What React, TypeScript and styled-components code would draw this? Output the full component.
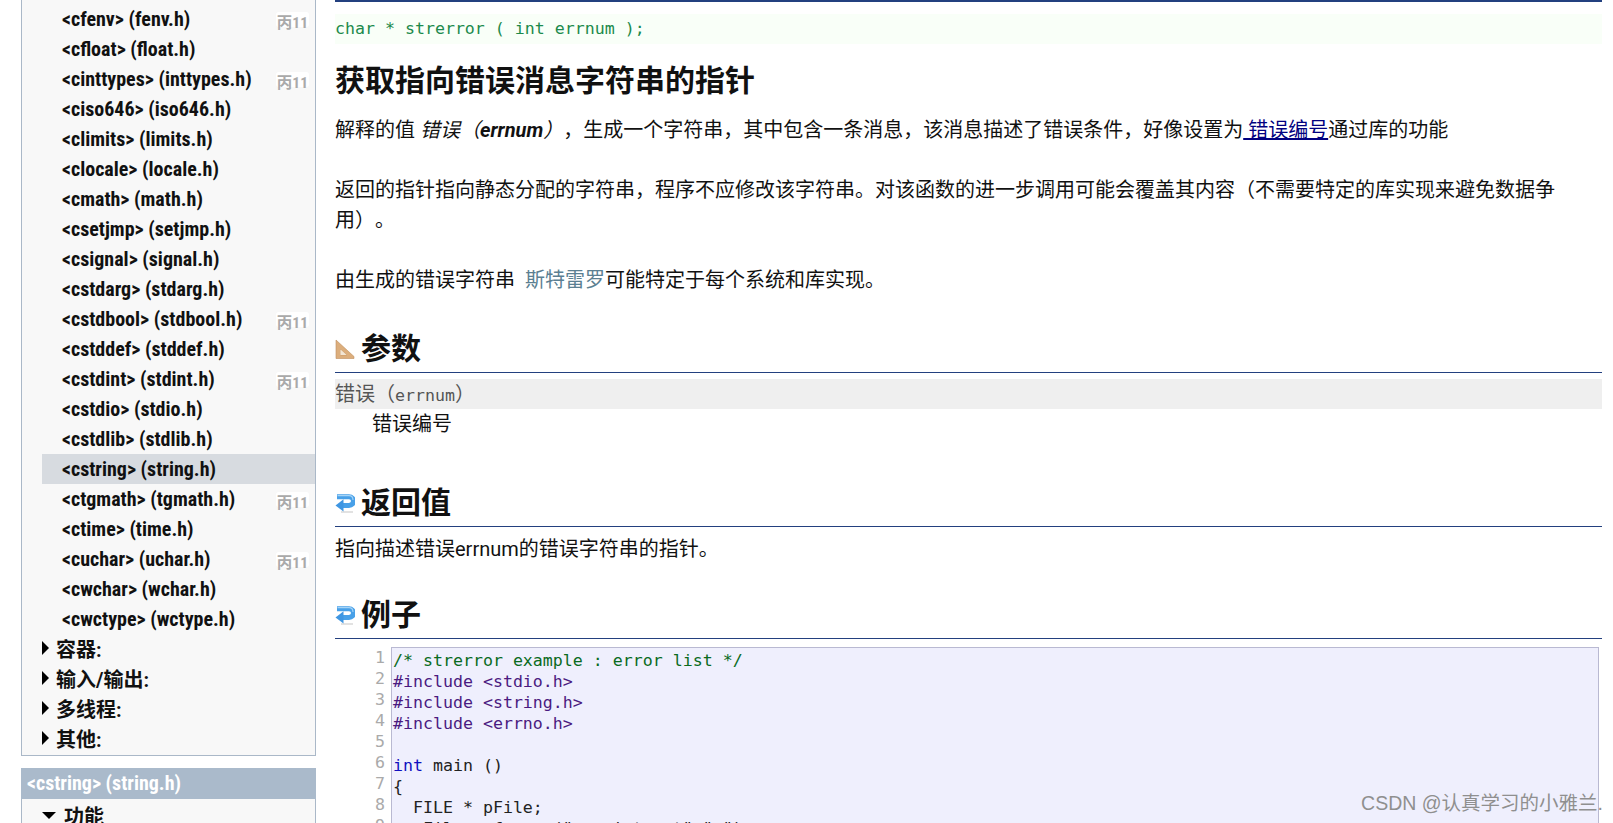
import { createGlobalStyle, styled } from 'styled-components';

const GlobalStyle = createGlobalStyle`
  html, body {
    margin: 0;
    padding: 0;
    background: #fff;
    overflow: hidden;
  }
  body {
    font-family: Roboto, "Noto Sans CJK SC", sans-serif;
    color: #111;
    text-spacing-trim: space-all;
  }
`;

const Page = styled.div`
  position: relative;
  display: flex;
  height: 823px;
  overflow: hidden;
`;

const Sidebar = styled.aside`
  flex: none;
  width: 295px;
  margin-left: 21px;
  display: flex;
  flex-direction: column;
  gap: 12px;
`;

const NavBox = styled.div<{ $flush?: boolean }>`
  background: #f8f8f8;
  border: 1px solid #aab8c8;
  border-top: 0;
  padding-top: ${(p) => (p.$flush ? 2 : 4)}px;
  padding-bottom: 1px;
`;

const NavHeader = styled.div`
  height: 31px;
  padding-left: 6px;
  background: #aabacb;
  color: #fff;
  font-size: 20px;
  font-weight: 700;
  font-stretch: 75%;
  line-height: 31px;
`;

const NavRow = styled.div<{ $active?: boolean }>`
  display: flex;
  align-items: center;
  justify-content: space-between;
  height: 30px;
  margin-left: 20px;
  padding-left: 20px;
  padding-right: 6px;
  background: ${(p) => (p.$active ? '#d7dbe0' : 'transparent')};
  font-size: 20px;
  font-weight: 700;
  font-stretch: 75%;
`;

const Badge = styled.span`
  height: 15px;
  padding: 0 1px;
  background: #fff;
  border-radius: 3px;
  color: #aaa;
  font-size: 15.5px;
  line-height: 22px;
  font-weight: 700;
`;

const GroupRow = styled.div`
  display: flex;
  align-items: center;
  box-sizing: border-box;
  height: 30px;
  padding-left: 20px;
  padding-bottom: 2px;
  font-size: 20px;
  font-weight: 700;
`;

const ArrowRight = styled.span`
  width: 0;
  height: 0;
  margin-right: 7px;
  border-left: 7px solid #000;
  border-top: 7px solid transparent;
  border-bottom: 7px solid transparent;
`;

const ArrowDown = styled.span`
  width: 0;
  height: 0;
  margin-right: 8px;
  border-top: 7px solid #000;
  border-left: 7px solid transparent;
  border-right: 7px solid transparent;
`;

const Main = styled.main`
  flex: none;
  width: 1267px;
  margin-left: 19px;
  border-top: 2px solid #23407f;
`;

const Proto = styled.div`
  height: 30px;
  margin-top: 12px;
  background: #f9fff8;
  color: #1c8a4c;
  font-family: "DejaVu Sans Mono", monospace;
  font-size: 16.6px;
  line-height: 30px;
  white-space: pre;
`;

const Title = styled.h1`
  margin: 17px 0 14px;
  font-size: 30px;
  line-height: 40px;
  font-weight: 700;
`;

const Para = styled.p`
  margin: 0 0 30px;
  padding-right: 40px;
  font-size: 20px;
  line-height: 30px;
`;

const Em = styled.em`
  font-style: italic;
  b {
    font-weight: 700;
  }
`;

const Link = styled.a`
  color: #000080;
  text-decoration: underline;
`;

const Term = styled.span`
  margin-left: 5px;
  color: #5b7f92;
`;

const SectionTitle = styled.h2<{ $top: number }>`
  display: flex;
  align-items: center;
  gap: 6px;
  height: 40px;
  margin: ${(p) => p.$top}px 0 0;
  padding-bottom: 3px;
  border-bottom: 1px solid #23407f;
  font-size: 30px;
  font-weight: 700;
  line-height: 40px;
`;

const ParamName = styled.div`
  height: 30px;
  margin-top: 6px;
  background: #efefef;
  color: #555;
  font-family: "DejaVu Sans Mono", "Noto Sans CJK SC", monospace;
  font-size: 16.6px;
  line-height: 30px;
`;

const ParamCjk = styled.span`
  font-size: 20px;
`;

const ParamText = styled.div`
  padding-left: 37px;
  font-size: 20px;
  line-height: 30px;
`;

const PlainText = styled.div`
  font-size: 20px;
  line-height: 30px;
  margin-top: 7px;
`;

const CodeWrap = styled.div`
  display: flex;
  margin-top: 8px;
  font-family: "DejaVu Sans Mono", monospace;
  font-size: 16.6px;
  line-height: 21px;
`;

const Gutter = styled.div`
  flex: none;
  width: 56px;
  padding-right: 6px;
  box-sizing: border-box;
  color: #aaa;
  text-align: right;
`;

const CodeBox = styled.pre`
  flex: 1;
  margin: 0 3px 0 0;
  padding: 2px 0 0 1px;
  background: #efeffd;
  border: 1px solid #b9b9d2;
  color: #222;
  font: inherit;
`;

const Comment = styled.span`
  color: #0a6b1e;
`;

const Directive = styled.span`
  color: #4b1a80;
`;

const Keyword = styled.span`
  color: #1010c0;
`;

const Watermark = styled.div`
  position: absolute;
  right: 10px;
  bottom: 8px;
  color: #8f8f8f;
  font-family: "Liberation Sans", "Noto Sans CJK SC", sans-serif;
  font-size: 19.5px;
  line-height: 24px;
  white-space: nowrap;
`;

const headers: { label: string; badge?: boolean; active?: boolean }[] = [
  { label: '<cfenv> (fenv.h)', badge: true },
  { label: '<cfloat> (float.h)' },
  { label: '<cinttypes> (inttypes.h)', badge: true },
  { label: '<ciso646> (iso646.h)' },
  { label: '<climits> (limits.h)' },
  { label: '<clocale> (locale.h)' },
  { label: '<cmath> (math.h)' },
  { label: '<csetjmp> (setjmp.h)' },
  { label: '<csignal> (signal.h)' },
  { label: '<cstdarg> (stdarg.h)' },
  { label: '<cstdbool> (stdbool.h)', badge: true },
  { label: '<cstddef> (stddef.h)' },
  { label: '<cstdint> (stdint.h)', badge: true },
  { label: '<cstdio> (stdio.h)' },
  { label: '<cstdlib> (stdlib.h)' },
  { label: '<cstring> (string.h)', active: true },
  { label: '<ctgmath> (tgmath.h)', badge: true },
  { label: '<ctime> (time.h)' },
  { label: '<cuchar> (uchar.h)', badge: true },
  { label: '<cwchar> (wchar.h)' },
  { label: '<cwctype> (wctype.h)' },
];

const groups = ['容器:', '输入/输出:', '多线程:', '其他:'];

function RulerIcon() {
  return (
    <svg width="20" height="20" viewBox="0 0 20 20">
      <path
        d="M1 1 L19 17.5 L19 19.5 L1 19.5 Z M5.5 10.5 L5.5 16 L11.5 16 Z"
        fill="#dcae7c"
        stroke="#c08f5e"
        strokeWidth="0.6"
        fillRule="evenodd"
      />
      <path d="M5.5 10.5 L5.5 16 L11.5 16 Z" fill="#f3e6d4" />
    </svg>
  );
}

function ReturnIcon() {
  return (
    <svg width="20" height="20" viewBox="0 0 20 20">
      <path d="M6 19 H18" stroke="#d8d8d8" strokeWidth="1.5" />
      <path
        d="M2 3.8 H14 C20 3.8 20 12.4 14 12.4 H7"
        stroke="#48a0e8"
        strokeWidth="5"
        fill="none"
      />
      <path d="M0.5 12.4 L8.5 6.2 V18.6 Z" fill="#3f96e2" />
      <path d="M2.5 2.6 H14 C16.8 2.6 18 4.6 18 7" stroke="#a5d4f7" strokeWidth="1.1" fill="none" />
    </svg>
  );
}

export default function App() {
  return (
    <Page>
      <GlobalStyle />
      <Sidebar>
        <NavBox>
          {headers.map((item) => (
            <NavRow key={item.label} $active={item.active}>
              <span>{item.label}</span>
              {item.badge && <Badge>丙11</Badge>}
            </NavRow>
          ))}
          {groups.map((g) => (
            <GroupRow key={g}>
              <ArrowRight />
              {g}
            </GroupRow>
          ))}
        </NavBox>
        <div>
          <NavHeader>{'<cstring> (string.h)'}</NavHeader>
          <NavBox $flush>
            <GroupRow>
              <ArrowDown />
              功能
            </GroupRow>
          </NavBox>
        </div>
      </Sidebar>
      <Main>
        <Proto>char * strerror ( int errnum );</Proto>
        <Title>获取指向错误消息字符串的指针</Title>
        <Para>
          解释的值 <Em>错误（<b>errnum</b>）</Em>，生成一个字符串，其中包含一条消息，该消息描述了错误条件，好像设置为<Link> 错误编号</Link>通过库的功能
        </Para>
        <Para>
          返回的指针指向静态分配的字符串，程序不应修改该字符串。对该函数的进一步调用可能会覆盖其内容（不需要特定的库实现来避免数据争用）。
        </Para>
        <Para>
          由生成的错误字符串 <Term>斯特雷罗</Term>可能特定于每个系统和库实现。
        </Para>
        <SectionTitle $top={34}>
          <RulerIcon />
          参数
        </SectionTitle>
        <ParamName>
          <ParamCjk>错误（</ParamCjk>errnum<ParamCjk>）</ParamCjk>
        </ParamName>
        <ParamText>错误编号</ParamText>
        <SectionTitle $top={44}>
          <ReturnIcon />
          返回值
        </SectionTitle>
        <PlainText>指向描述错误errnum的错误字符串的指针。</PlainText>
        <SectionTitle $top={31}>
          <ReturnIcon />
          例子
        </SectionTitle>
        <CodeWrap>
          <Gutter>
            {[1, 2, 3, 4, 5, 6, 7, 8, 9, 10].map((n) => (
              <div key={n}>{n}</div>
            ))}
          </Gutter>
          <CodeBox>
            <Comment>{'/* strerror example : error list */'}</Comment>
            {'\n'}
            <Directive>{'#include <stdio.h>'}</Directive>
            {'\n'}
            <Directive>{'#include <string.h>'}</Directive>
            {'\n'}
            <Directive>{'#include <errno.h>'}</Directive>
            {'\n\n'}
            <Keyword>int</Keyword>
            {' main ()\n{\n  FILE * pFile;\n  pFile = fopen ("unexist.ent","r");\n  if (pFile == NULL)'}
          </CodeBox>
        </CodeWrap>
      </Main>
      <Watermark>CSDN @认真学习的小雅兰.</Watermark>
    </Page>
  );
}
